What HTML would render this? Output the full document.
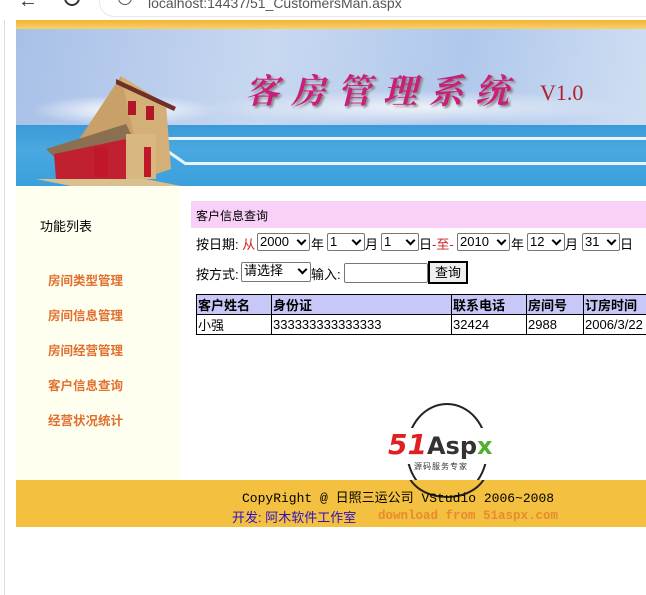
<!DOCTYPE html>
<html><head><meta charset="utf-8"><style>
*{margin:0;padding:0;box-sizing:border-box}
body{width:646px;height:595px;overflow:hidden;background:#fff;position:relative;font-family:"Liberation Sans","Noto Sans CJK SC",sans-serif;font-size:12px;color:#000}
.a{position:absolute}
.sel{position:absolute;border:1px solid #767676;border-radius:2px;background:#fff;height:18px;font-size:13px;line-height:16px;padding-left:2px}
.sel:after{content:"";position:absolute;right:4px;top:3px;width:5px;height:5px;border-right:2px solid #000;border-bottom:2px solid #000;transform:rotate(45deg)}
.side{color:#e07030;font-weight:bold;font-size:12.5px;left:48px}
table{border-collapse:collapse}
td{border:1px solid #000;height:18px;font-size:13px;padding-left:1px;white-space:nowrap;overflow:hidden}
</style></head><body>
<div class="a" style="left:100px;top:-12px;width:560px;height:28px;border-radius:14px;background:#fff;box-shadow:0 0 0 1px #e8e8e8"></div>
<div class="a" style="left:18px;top:-10px;font-size:20px;color:#333">←</div>
<div class="a" style="left:64px;top:-10px;width:16px;height:16px;border:2px solid #333;border-radius:50%"></div>
<div class="a" style="left:118px;top:-9px;width:14px;height:14px;border:1.5px solid #555;border-radius:50%"></div>
<div class="a" style="left:148px;top:-5px;font-size:14px;color:#555">localhost:14437/51_CustomersMan.aspx</div>
<div class="a" style="left:4px;top:20px;width:1px;height:575px;background:#ddd"></div>
<div class="a" style="left:16px;top:20px;width:630px;height:9px;background:linear-gradient(#f2b431,#f8d070)"></div>
<div class="a" style="left:16px;top:29px;width:630px;height:96px;background:linear-gradient(100deg,#a8c0e8,#c8d8f0 40%,#b0c8ec 70%,#d0def2)"></div>
<div class="a" style="left:30px;top:95px;width:190px;height:30px;background:radial-gradient(ellipse at center,#fff 0%,rgba(255,255,255,0) 70%)"></div>
<div class="a" style="left:200px;top:90px;width:430px;height:35px;background:radial-gradient(ellipse at center,#eef2f8 0%,rgba(255,255,255,0) 70%)"></div>
<div class="a" style="left:16px;top:125px;width:630px;height:61px;background:linear-gradient(#3a9ad8,#4aa8e0 40%,#3aa0dc)"></div>
<div class="a" style="left:150px;top:137px;width:496px;height:3px;background:#e8f4fc"></div>
<div class="a" style="left:185px;top:162px;width:461px;height:3px;background:#e8f4fc"></div>
<svg class="a" style="left:16px;top:29px" width="630" height="157">
<line x1="134" y1="110" x2="170" y2="135" stroke="#e8f4fc" stroke-width="3"/>
<polygon points="20,150 130,150 170,158 60,158" fill="#d8c090"/>
<polygon points="60,115 105,47 125,115" fill="#c8a068"/>
<polygon points="105,47 150,75 155,140 125,150 120,115" fill="#d4b078"/>
<polygon points="30,120 110,95 120,115 40,130" fill="#8a7050"/>
<polygon points="38,125 110,110 112,150 40,150" fill="#c02030"/>
<polygon points="100,50 160,78 158,82 100,55" fill="#703028"/>
<rect x="110" y="105" width="30" height="45" fill="#d8b880"/>
<rect x="112" y="72" width="8" height="14" fill="#b01828"/>
<rect x="130" y="77" width="8" height="14" fill="#b01828"/>
<rect x="128" y="118" width="7" height="30" fill="#c01828"/>
<rect x="78" y="118" width="14" height="30" fill="#c01828"/>
</svg>
<div class="a" style="left:245px;top:64px;font-family:'Noto Serif CJK SC',serif;font-size:34px;letter-spacing:12px;color:#c8207a;text-shadow:2px 2px 2px #888;font-weight:bold;font-style:italic">客房管理系统</div>
<div class="a" style="left:540px;top:80px;font-size:22px;color:#b02030;font-family:'Liberation Serif',serif">V1.0</div>
<div class="a" style="left:16px;top:186px;width:164px;height:294px;background:#fffff0"></div>
<div class="a" style="left:40px;top:216px;font-size:13px">功能列表</div>
<div class="a side" style="top:270px">房间类型管理</div>
<div class="a side" style="top:305px">房间信息管理</div>
<div class="a side" style="top:340px">房间经营管理</div>
<div class="a side" style="top:375px">客户信息查询</div>
<div class="a side" style="top:410px">经营状况统计</div>
<div class="a" style="left:191px;top:201px;width:455px;height:27px;background:#f8d0f8"></div>
<div class="a" style="left:196px;top:207px;font-size:12px">客户信息查询</div>
<div class="a" style="left:196px;top:234px;font-size:13px">按日期: <span style="color:#d02020">从</span></div>
<div class="sel" style="left:257px;top:233px;width:53px">2000</div>
<div class="a" style="left:311px;top:234px;font-size:13px">年</div>
<div class="sel" style="left:327px;top:233px;width:38px">1</div>
<div class="a" style="left:365px;top:234px;font-size:13px">月</div>
<div class="sel" style="left:381px;top:233px;width:38px">1</div>
<div class="a" style="left:419px;top:234px;font-size:13px">日<span style="color:#d02020">-至-</span></div>
<div class="sel" style="left:457px;top:233px;width:53px">2010</div>
<div class="a" style="left:511px;top:234px;font-size:13px">年</div>
<div class="sel" style="left:527px;top:233px;width:38px">12</div>
<div class="a" style="left:565px;top:234px;font-size:13px">月</div>
<div class="sel" style="left:582px;top:233px;width:38px">31</div>
<div class="a" style="left:620px;top:234px;font-size:13px">日</div>
<div class="a" style="left:196px;top:264px;font-size:13px">按方式:</div>
<div class="sel" style="left:241px;top:262px;width:70px;height:20px">请选择</div>
<div class="a" style="left:311px;top:264px;font-size:13px">输入:</div>
<div class="a" style="left:344px;top:263px;width:84px;height:20px;border:1px solid #767676;border-radius:2px"></div>
<div class="a" style="left:428px;top:261px;width:40px;height:23px;border:2px solid #000;background:#efefef;font-size:13px;text-align:center;line-height:19px">查询</div>
<table class="a" style="left:196px;top:294px;width:460px">
<tr style="background:#c8c8f8;font-weight:bold"><td style="width:75px">客户姓名</td><td style="width:180px">身份证</td><td style="width:75px">联系电话</td><td style="width:57px">房间号</td><td>订房时间</td></tr>
<tr><td>小强</td><td>333333333333333</td><td>32424</td><td>2988</td><td>2006/3/22</td></tr>
</table>
<div class="a" style="left:406px;top:403px;width:82px;height:95px;border:2px solid #222;border-radius:50%"></div>
<div class="a" style="left:390px;top:428px;width:120px;height:36px;background:#fff"></div>
<div class="a" style="left:388px;top:428px;font-size:28px;font-weight:bold;font-style:italic;font-family:'DejaVu Sans',sans-serif;white-space:nowrap"><span style="color:#e02020">51</span><span style="color:#333;font-style:normal;font-size:24px">Asp</span><span style="color:#50b030;font-style:normal;font-size:24px">x</span></div>
<div class="a" style="left:414px;top:461px;font-size:8px;color:#333;letter-spacing:1px">源码服务专家</div>
<div class="a" style="left:16px;top:480px;width:630px;height:47px;background:#f4c040"></div>
<div class="a" style="left:406px;top:440px;width:82px;height:58px;border:2px solid #222;border-top:none;border-radius:0 0 41px 41px/0 0 30px 30px;clip-path:inset(40px 0 0 0)"></div>
<div class="a" style="left:242px;top:487px;font-family:'Liberation Mono',monospace;font-size:13px">CopyRight @ <span style="font-family:'Liberation Sans','Noto Sans CJK SC',sans-serif;font-size:13px">日照三运公司</span> VStudio 2006~2008</div>
<div class="a" style="left:232px;top:507px;font-size:13px;color:#3010c0">开发: 阿木软件工作室</div>
<div class="a" style="left:378px;top:509px;font-family:'Liberation Mono',monospace;font-size:12.5px;font-weight:bold;color:#e88a30">download from 51aspx.com</div>
</body></html>
